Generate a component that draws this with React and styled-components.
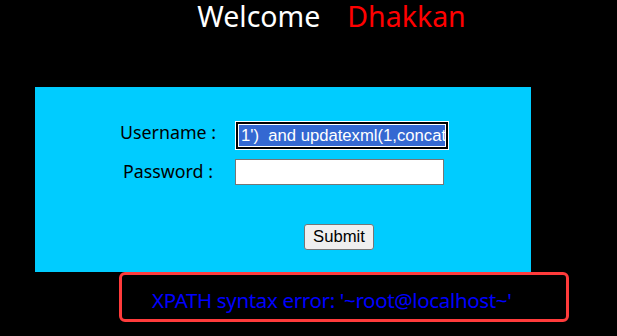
import React from "react";
import styled, { createGlobalStyle } from "styled-components";

const GlobalStyle = createGlobalStyle`
  html, body {
    margin: 0;
    padding: 0;
    background: #000;
  }
  body {
    font-family: "Noto Sans", "Open Sans", sans-serif;
    width: 617px;
    height: 336px;
    overflow: hidden;
  }
`;

const Page = styled.div`
  width: 617px;
  height: 336px;
  background: #000;
`;

const Header = styled.div`
  display: flex;
  justify-content: center;
  gap: 27px;
  padding-left: 46px;
  margin-top: -3px;
  height: 39px;
  font-size: 28.5px;
  line-height: normal;
  color: #fff;
`;

const Name = styled.span`
  color: #ff0000;
`;

const FormBox = styled.div`
  box-sizing: border-box;
  width: 496px;
  height: 185px;
  margin: 51px 0 0 35px;
  padding: 35px 0 0 66px;
  background: #00ccff;
  display: grid;
  grid-template-columns: 134px 1fr;
  grid-template-rows: 27px 26px auto;
  align-content: start;
  row-gap: 10px;
  align-items: center;
`;

const Label = styled.div`
  text-align: center;
  font-size: 17.8px;
  line-height: 20px;
  color: #000;
  margin-bottom: ${(p) => p.$lift || 0}px;
`;

const Field = styled.div`
  box-sizing: border-box;
  width: ${(p) => (p.$focused ? 212 : 209)}px;
  height: ${(p) => (p.$focused ? 27 : 26)}px;
  margin-left: ${(p) => (p.$focused ? 1 : 0)}px;
  background: #fff;
  border: ${(p) => (p.$focused ? "2px solid #000" : "1px solid #767676")};
  outline: ${(p) => (p.$focused ? "1px solid #fff" : "none")};
  box-shadow: ${(p) => (p.$focused ? "inset 0 0 0 1px #fff" : "none")};
  padding: 1px;
  overflow: hidden;
  display: flex;
`;

const Selected = styled.span`
  flex: 1;
  background: #3468d2;
  color: #fff;
  font-family: "Liberation Sans", Arial, sans-serif;
  font-size: 16.67px;
  line-height: 21px;
  padding-left: 2px;
  white-space: pre;
  overflow: hidden;
`;

const SubmitRow = styled.div`
  grid-column: 2;
  padding: 29px 0 0 69px;
`;

const SubmitButton = styled.button`
  box-sizing: border-box;
  display: block;
  width: 70px;
  height: 26px;
  padding: 0;
  background: #efefef;
  border: 1px solid #767676;
  border-radius: 3px;
  font-family: "Liberation Sans", Arial, sans-serif;
  font-size: 16.67px;
  color: #000;
`;

const ErrorBox = styled.div`
  box-sizing: border-box;
  width: 450px;
  height: 50px;
  margin-left: 119px;
  border: 3px solid #ff3b3b;
  border-radius: 6px;
  padding: 12px 0 0 30px;
  color: #0000ff;
  font-size: 20.5px;
  letter-spacing: -0.35px;
  line-height: 26px;
`;

export default function App() {
  return (
    <Page>
      <GlobalStyle />
      <Header>
        <span>Welcome</span>
        <Name>Dhakkan</Name>
      </Header>
      <FormBox>
        <Label $lift={7}>Username :</Label>
        <Field $focused>
          <Selected>1')  and updatexml(1,concat(0x7e,(select user()),0x7e),1)#</Selected>
        </Field>
        <Label $lift={2}>Password :</Label>
        <Field />
        <SubmitRow>
          <SubmitButton>Submit</SubmitButton>
        </SubmitRow>
      </FormBox>
      <ErrorBox>XPATH syntax error: '~root@localhost~'</ErrorBox>
    </Page>
  );
}
